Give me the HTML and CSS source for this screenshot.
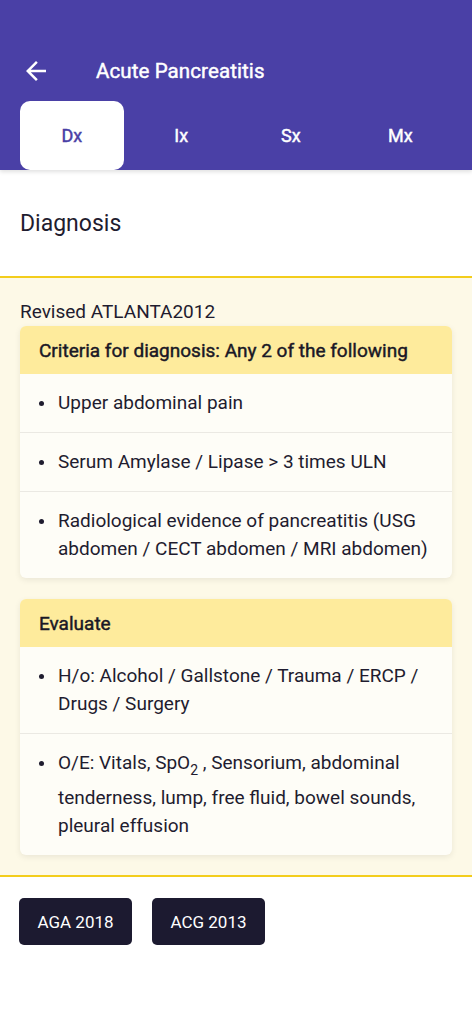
FILE: index.html
```html
<!DOCTYPE html>
<html lang="en">
<head>
<meta charset="utf-8">
<title>Acute Pancreatitis</title>
<link rel="stylesheet" href="styles.css">
</head>
<body>
<header class="appbar">
  <div class="toolbar">
    <button class="back" aria-label="Back">
      <svg width="30" height="30" viewBox="0 0 24 24"><path d="M20 11H7.83l5.59-5.59L12 4l-8 8 8 8 1.41-1.41L7.83 13H20v-2z" fill="#fff"/></svg>
    </button>
    <h1 class="title">Acute Pancreatitis</h1>
  </div>
  <nav class="tabs">
    <div class="tab active">Dx</div>
    <div class="tab">Ix</div>
    <div class="tab">Sx</div>
    <div class="tab">Mx</div>
  </nav>
</header>

<section class="heading">
  <h2>Diagnosis</h2>
</section>

<section class="content">
  <div class="subtitle">Revised ATLANTA2012</div>
  <div class="card">
    <div class="card-head">Criteria for diagnosis: Any 2 of the following</div>
    <ul class="rows">
      <li>Upper abdominal pain</li>
      <li>Serum Amylase / Lipase &gt; 3 times ULN</li>
      <li>Radiological evidence of pancreatitis (USG abdomen / CECT abdomen / MRI abdomen)</li>
    </ul>
  </div>
  <div class="card">
    <div class="card-head">Evaluate</div>
    <ul class="rows">
      <li>H/o: Alcohol / Gallstone / Trauma / ERCP / Drugs / Surgery</li>
      <li>O/E: Vitals, SpO<sub>2</sub> , Sensorium, abdominal tenderness, lump, free fluid, bowel sounds, pleural effusion</li>
    </ul>
  </div>
</section>

<div class="buttons">
  <button class="btn">AGA 2018</button>
  <button class="btn">ACG 2013</button>
</div>
</body>
</html>
```

FILE: styles.css
```css
* { box-sizing: border-box; }
html, body { margin: 0; padding: 0; }
body {
  font-family: Roboto, "Noto Sans", sans-serif;
  color: #1f1c2f;
  background: #ffffff;
  width: 472px;
}
.appbar {
  background: #4a40a6;
  padding-top: 41px;
  box-shadow: 0 2px 4px rgba(0,0,0,0.12);
  position: relative;
  z-index: 1;
}
.toolbar {
  height: 60px;
  display: flex;
  align-items: center;
  padding-left: 21px;
}
.back {
  background: none;
  border: 0;
  padding: 0;
  width: 30px;
  height: 30px;
  display: flex;
  align-items: center;
  justify-content: center;
  margin-right: 45px;
}
.title {
  margin: 0;
  color: #fff;
  font-size: 20.5px;
  font-weight: 400;
  -webkit-text-stroke: 0.45px #fff;
  letter-spacing: 0.1px;
}
.tabs {
  display: grid;
  grid-template-columns: repeat(4, 1fr);
  padding: 0 17px;
  height: 69px;
}
.tab {
  display: flex;
  align-items: center;
  justify-content: center;
  color: #fff;
  font-size: 18px;
  font-weight: 400;
  -webkit-text-stroke: 0.45px currentColor;
  margin: 0 3px;
  border-radius: 10px;
}
.tab.active {
  background: #fff;
  color: #4a40a6;
}
.heading {
  height: 108px;
  display: flex;
  align-items: center;
  padding: 0 20px;
  border-bottom: 2px solid #f3cd1c;
}
.heading h2 {
  margin: 0;
  font-size: 23px;
  font-weight: 400;
  color: #1f1c2f;
}
.content {
  background: #fdf9e7;
  padding: 22px 20px 20px;
  border-bottom: 2px solid #f3cd1c;
  display: flex;
  flex-direction: column;
  gap: 21px;
}
.subtitle {
  font-size: 19px;
  line-height: 26px;
  margin-bottom: -21px;
  margin-top: -1px;
  padding-bottom: 1px;
}
.card {
  background: #fefdf7;
  border-radius: 6px;
  box-shadow: 0 2px 6px rgba(0,0,0,0.08);
  overflow: hidden;
}
.card-head {
  background: #feeb9c;
  height: 48px;
  display: flex;
  align-items: center;
  padding: 0 19px;
  font-size: 19px;
  font-weight: 400;
  -webkit-text-stroke: 0.45px #1a1826;
  color: #1a1826;
}
.rows {
  list-style: none;
  margin: 0;
  padding: 0;
}
.rows li {
  position: relative;
  padding: 15px 16px 15px 38px;
  font-size: 19px;
  line-height: 28px;
  border-top: 1px solid #ebe9e3;
}
.rows li:first-child { border-top: 0; }
.rows li::before {
  content: "";
  position: absolute;
  left: 19px;
  top: 27px;
  width: 5px;
  height: 5px;
  border-radius: 50%;
  background: #1f1c2f;
}
.rows sub {
  font-size: 14px;
  line-height: 28px;
  vertical-align: -6px;
}
.buttons {
  display: flex;
  gap: 20px;
  padding: 21px 19px;
}
.btn {
  background: #1c1a30;
  color: #fff;
  border: 0;
  border-radius: 5px;
  height: 47px;
  width: 113px;
  font-family: Roboto, "Noto Sans", sans-serif;
  font-size: 17px;
  font-weight: 400;
}
```
